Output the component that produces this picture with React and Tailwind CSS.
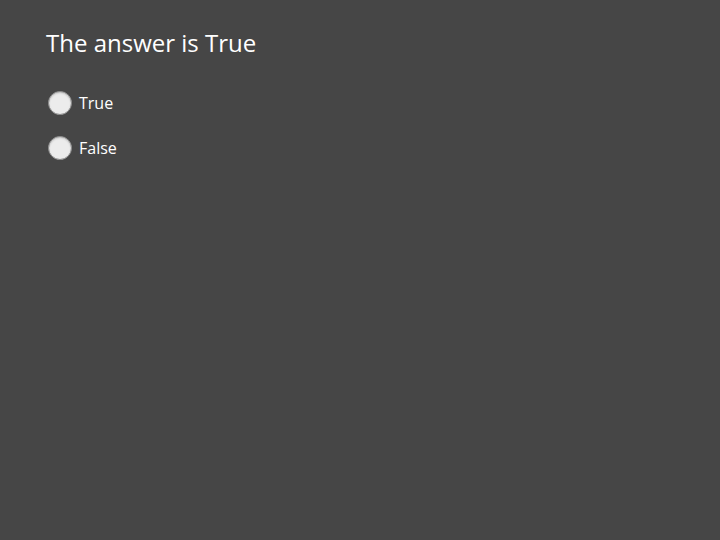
import React from 'react';

const options = ['True', 'False'];

const App = () => {
  const [value, setValue] = React.useState(null);

  return (
    <div className="min-h-[540px] w-full bg-[#464646] text-white px-[46px] pt-[27px]" style={{ fontFamily: '"Open Sans", sans-serif' }}>
      <h1 className="text-[24px] leading-[32px] font-normal">The answer is True</h1>
      <div className="mt-[32px] flex flex-col gap-[21px]">
        {options.map((opt) => (
          <label key={opt} className="flex items-center gap-[7px] cursor-pointer pl-[2px]">
            <span
              onClick={() => setValue(opt)}
              className="w-[24px] h-[24px] rounded-full bg-[#ececec] border border-[#8a8a8a] shadow-[inset_0_1px_2px_rgba(0,0,0,0.2)] flex items-center justify-center"
            >
              {value === opt && <span className="w-[10px] h-[10px] rounded-full bg-[#464646]" />}
            </span>
            <span className="text-[16px] leading-[24px]">{opt}</span>
          </label>
        ))}
      </div>
    </div>
  );
};

export default App;
